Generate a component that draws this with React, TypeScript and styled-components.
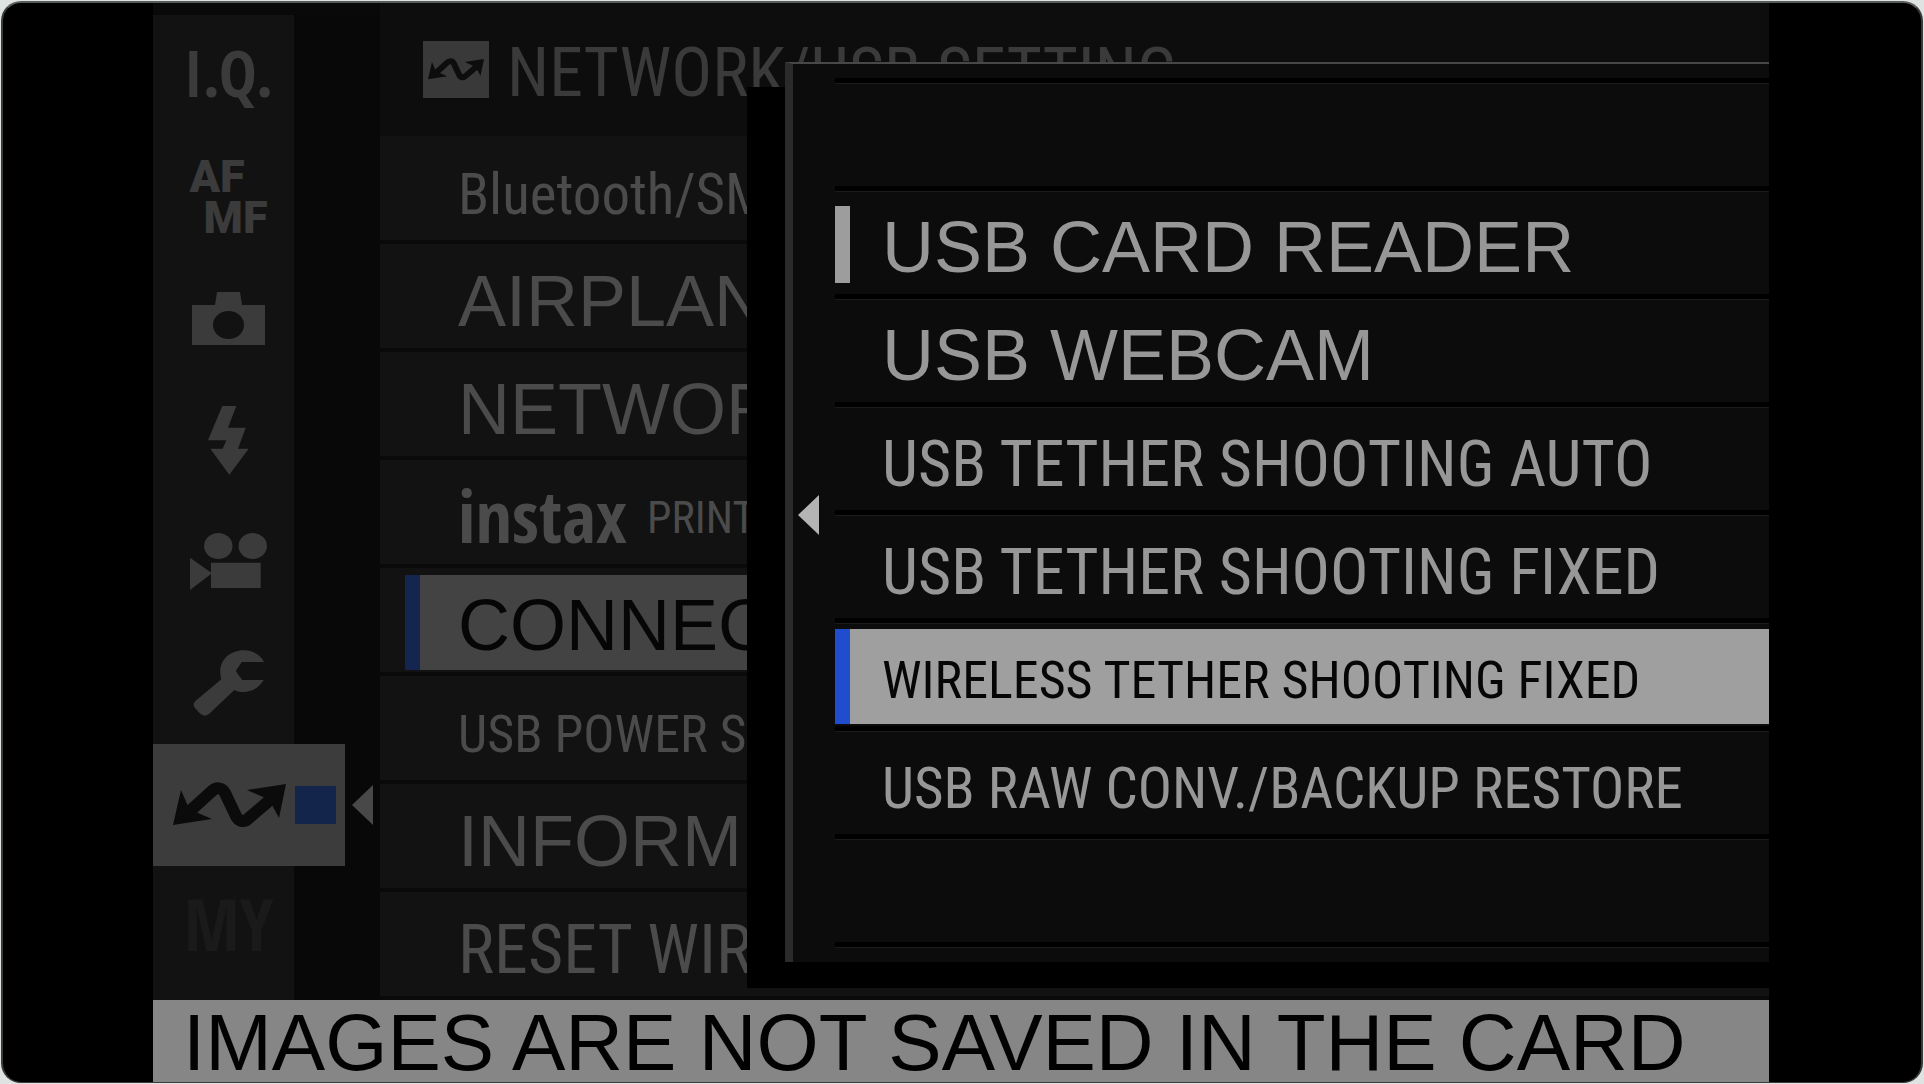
import React, { useState } from "react";
import styled, { createGlobalStyle } from "styled-components";

type Face = "regular" | "header" | "narrow" | "compact" | "dense" | "tight";

const sans = '"Liberation Sans", Arial, sans-serif';
const condensed = '"Roboto Condensed", Roboto, "Liberation Sans", sans-serif';
const heavy = '"Open Sans Condensed", "Roboto Condensed", Roboto, sans-serif';

const faces: Record<Face, { family: string; size: number; drop: number }> = {
  regular: { family: sans, size: 72, drop: 4 },
  header: { family: condensed, size: 68, drop: 7 },
  narrow: { family: condensed, size: 64, drop: 7 },
  compact: { family: condensed, size: 57, drop: 7 },
  dense: { family: condensed, size: 52, drop: 7 },
  tight: { family: condensed, size: 44, drop: 7 },
};

const GlobalStyle = createGlobalStyle`
  *, *::before, *::after { box-sizing: border-box; }
  body { margin: 0; background: #dfe3e1; }
  button { font: inherit; color: inherit; border: 0; padding: 0; margin: 0; background: none; text-align: left; cursor: pointer; }
  ul { list-style: none; margin: 0; padding: 0; }
`;

const Desk = styled.div`
  display: flex;
  min-height: 100vh;
  padding: 1px;
`;

const Frame = styled.div`
  flex: 1;
  display: flex;
  min-width: 0;
  padding: 0 152px 0 150px;
  overflow: hidden;
  background: #000;
  border: 2px solid #3a3c3c;
  border-top-color: #5a5c5a;
  border-bottom-width: 1px;
  border-radius: 20px;
`;

const Screen = styled.main`
  flex: 1;
  min-width: 0;
  display: flex;
  flex-direction: column;
  background: #0a0a0a;
  overflow: hidden;
`;

const Body = styled.div`
  position: relative;
  flex: 1;
  display: grid;
  grid-template-columns: 227px 1fr;
`;

const Tabs = styled.nav`
  display: flex;
  flex-direction: column;
  padding-bottom: 13px;
  border-top: 12px solid #090909;
  background: linear-gradient(to right, #121212 141px, #080808 141px);
`;

const TabRow = styled.div`
  flex: 1;
  display: flex;
  align-items: center;
  gap: 7px;
`;

const Tab = styled.button<{ $selected?: boolean; $faint?: boolean }>`
  align-self: stretch;
  width: ${(p) => (p.$selected ? 192 : 141)}px;
  display: flex;
  align-items: center;
  justify-content: center;
  gap: 9px;
  padding-left: 10px;
  background: ${(p) => (p.$selected ? "#3c3c3c" : "transparent")};
  color: ${(p) => (p.$selected ? "#0b0b0b" : p.$faint ? "#1a1a1a" : "#3b3b3b")};
`;

const TabText = styled.span<{ $large?: boolean }>`
  padding-bottom: 6px;
  font: bold ${(p) => (p.$large ? 72 : 64)}px ${heavy};
  line-height: 72px;
`;

const FocusText = styled.span`
  display: flex;
  flex-direction: column;
  font: 900 45px Roboto, ${sans};
  line-height: 41px;
`;

const FocusLine = styled.span<{ $shift?: boolean }>`
  padding-left: ${(p) => (p.$shift ? 14 : 0)}px;
`;

const PageChip = styled.span`
  width: 41px;
  height: 38px;
  background: #13254b;
`;

const Menu = styled.section`
  min-width: 0;
  background: #0d0d0d;
`;

const MenuHeader = styled.header`
  display: flex;
  align-items: center;
  gap: 18px;
  height: 133px;
  padding-left: 43px;
  color: #3a3a3a;
`;

const HeaderBadge = styled.span`
  display: flex;
  align-items: center;
  justify-content: center;
  width: 66px;
  height: 57px;
  background: #393939;
  color: #0d0d0d;
`;

const Title = styled.h1`
  margin: 0;
  padding-top: 6px;
  font: normal ${faces.header.size}px ${faces.header.family};
  white-space: nowrap;
`;

const MenuRow = styled.li`
  height: 108px;
  padding: 7px 0 2px 25px;
  background: #121212;
  border-bottom: 4px solid #0a0a0a;
`;

const RowButton = styled.button<{ $selected: boolean; $fill: string; $ink: string }>`
  display: flex;
  align-items: center;
  width: 100%;
  height: 95px;
  overflow: hidden;
  white-space: nowrap;
  background: ${(p) => (p.$selected ? p.$fill : "transparent")};
  color: ${(p) => (p.$selected ? "#060606" : p.$ink)};
`;

const Marker = styled.span<{ $color: string; $short?: boolean }>`
  flex: none;
  width: 15px;
  height: ${(p) => (p.$short ? "77px" : "100%")};
  background: ${(p) => p.$color};
`;

const Label = styled.span<{ $face: Face }>`
  padding: ${(p) => faces[p.$face].drop}px 0 0 32px;
  font: normal ${(p) => faces[p.$face].size}px ${(p) => faces[p.$face].family};
`;

const MenuLabel = styled(Label)`
  padding-left: 38px;
`;

const Brand = styled.b`
  margin-right: 20px;
  padding-bottom: 6px;
  font: bold 72px ${heavy};
  line-height: 72px;
`;

const MixedLabel = styled(MenuLabel)`
  display: flex;
  align-items: center;
`;

const Popup = styled.div`
  position: absolute;
  left: 594px;
  right: 0;
  top: 59px;
  padding: 0 0 26px 38px;

  &::before {
    content: "";
    position: absolute;
    inset: 25px 0 0 0;
    background: #000;
  }
`;

const PopupPanel = styled.section`
  position: relative;
  display: grid;
  grid-template-columns: 42px 1fr;
  padding-top: 14px;
  background: #0c0c0c;
  border-left: 8px solid #2b2b2b;
  border-top: 2px solid #484848;
`;

const Gutter = styled.div`
  display: flex;
  align-items: center;
  padding: 0 0 10px 5px;
  color: #b4b4b4;
`;

const OptionRow = styled.li`
  height: 108px;
  padding: 6px 0 2px;
  border-top: 5px solid #000;
  box-shadow: inset 0 1px #1b1b1b;
`;

const ListEnd = styled.li`
  height: 20px;
  border-top: 5px solid #000;
  box-shadow: inset 0 1px #1b1b1b;
`;

const Message = styled.footer`
  display: flex;
  align-items: center;
  height: 82px;
  padding: 4px 0 0 30px;
  background: #868686;
  color: #020202;
  font: normal 80px ${sans};
  line-height: 78px;
  white-space: nowrap;
`;

const LinkIcon = ({ width = 113 }: { width?: number }) => (
  <svg width={width} viewBox="0 0 113 46" fill="currentColor" aria-hidden="true">
    <path
      d="M17 29 L38 10 C43 5 49 5 52 11 L62 32 C65 40 71 41 76 36 L97 18"
      fill="none"
      stroke="currentColor"
      strokeWidth="12"
    />
    <path d="M0 43 L8 8 L15 24 L25 31 L39 37 Z" />
    <path d="M113 2 L74 8 L90 15 L99 23 L106 36 Z" />
  </svg>
);

const CameraIcon = () => (
  <svg width="73" height="53" viewBox="0 0 73 53" fill="currentColor" aria-hidden="true">
    <path
      fillRule="evenodd"
      d="M25 0H48L50 13H73V53H0V13H23Z M21 33a15.5 14 0 1 0 31 0a15.5 14 0 1 0 -31 0Z"
    />
  </svg>
);

const FlashIcon = () => (
  <svg width="41" height="69" viewBox="0 0 41 69" fill="currentColor" aria-hidden="true">
    <path d="M14.3 0H28.3L20 21.7H37.7L30 42.7H40.7L21.3 68.7L2.3 42.7H14.7L18.3 34.3H0Z" />
  </svg>
);

const MovieIcon = () => (
  <svg width="77" height="57" viewBox="0 0 77 57" fill="currentColor" aria-hidden="true">
    <ellipse cx="28.3" cy="13" rx="14.2" ry="13" />
    <ellipse cx="62.7" cy="13" rx="14.2" ry="13" />
    <path d="M21 29.7H70.7V55H21V41L0 57V24.7L21 39.5Z" />
  </svg>
);

const WrenchIcon = () => (
  <svg width="71" height="66" viewBox="0 0 71 66" fill="currentColor" aria-hidden="true">
    <path d="M71 12H48.7L42.7 21L49.3 30H70.7C66 38 58 42 50.7 42C47 42 44 41.5 41.3 40L16 64Q11.3 67.5 7 63.5L2 58Q-1 54 3 50.5L28.3 29.3C27.5 27 27.3 24 27.3 21C27.3 9 38 .3 50.7 .3C60 .3 67.5 5 71 12Z" />
  </svg>
);

const BackArrow = ({ color = "currentColor" }: { color?: string }) => (
  <svg width="21" height="40" viewBox="0 0 21 40" fill={color} aria-hidden="true">
    <path d="M0 20L21 0V40Z" />
  </svg>
);

const tabs: { name: string; icon: React.ReactNode; faint?: boolean }[] = [
  { name: "Image quality", icon: <TabText>I.Q.</TabText> },
  {
    name: "Focus",
    icon: (
      <FocusText>
        <FocusLine>AF</FocusLine>
        <FocusLine $shift>MF</FocusLine>
      </FocusText>
    ),
  },
  { name: "Shooting", icon: <CameraIcon /> },
  { name: "Flash", icon: <FlashIcon /> },
  { name: "Movie", icon: <MovieIcon /> },
  { name: "Set up", icon: <WrenchIcon /> },
  { name: "Network", icon: <LinkIcon /> },
  { name: "My menu", icon: <TabText $large>MY</TabText>, faint: true },
];

const menu: { text: string; face: Face; brand?: string }[] = [
  { text: "Bluetooth/SM", face: "compact" },
  { text: "AIRPLAN", face: "regular" },
  { text: "NETWOR", face: "regular" },
  { text: "PRINT", face: "tight", brand: "instax" },
  { text: "CONNEC", face: "regular" },
  { text: "USB POWER SU", face: "dense" },
  { text: "INFORM", face: "regular" },
  { text: "RESET WIR", face: "header" },
];

const options: { text: string; face: Face }[] = [
  { text: "USB CARD READER", face: "regular" },
  { text: "USB WEBCAM", face: "regular" },
  { text: "USB TETHER SHOOTING AUTO", face: "narrow" },
  { text: "USB TETHER SHOOTING FIXED", face: "narrow" },
  { text: "WIRELESS TETHER SHOOTING FIXED", face: "dense" },
  { text: "USB RAW CONV./BACKUP RESTORE", face: "compact" },
];

export default function App() {
  const [tab, setTab] = useState(6);
  const [cursor, setCursor] = useState(4);
  const current = 0;

  return (
    <>
      <GlobalStyle />
      <Desk>
        <Frame>
          <Screen>
            <Body>
              <Tabs>
                {tabs.map((t, i) => (
                  <TabRow key={t.name}>
                    <Tab
                      type="button"
                      aria-label={t.name}
                      $selected={i === tab}
                      $faint={t.faint}
                      onClick={() => setTab(i)}
                    >
                      {t.icon}
                      {i === tab && <PageChip />}
                    </Tab>
                    {i === tab && <BackArrow color="#484848" />}
                  </TabRow>
                ))}
              </Tabs>
              <Menu>
                <MenuHeader>
                  <HeaderBadge>
                    <LinkIcon width={56} />
                  </HeaderBadge>
                  <Title>NETWORK/USB SETTING</Title>
                </MenuHeader>
                <ul>
                  {menu.map((m, i) => (
                    <MenuRow key={m.text}>
                      <RowButton type="button" $selected={i === 4} $fill="#434343" $ink="#4b4b4b">
                        <Marker $color={i === 4 ? "#14264f" : "transparent"} />
                        {m.brand ? (
                          <MixedLabel $face={m.face}>
                            <Brand>{m.brand}</Brand>
                            {m.text}
                          </MixedLabel>
                        ) : (
                          <MenuLabel $face={m.face}>{m.text}</MenuLabel>
                        )}
                      </RowButton>
                    </MenuRow>
                  ))}
                </ul>
              </Menu>
              <Popup>
                <PopupPanel>
                  <Gutter>
                    <BackArrow />
                  </Gutter>
                  <ul>
                    <OptionRow aria-hidden="true" />
                    {options.map((o, i) => (
                      <OptionRow key={o.text}>
                        <RowButton
                          type="button"
                          $selected={i === cursor}
                          $fill="#9f9f9f"
                          $ink="#979797"
                          onClick={() => setCursor(i)}
                        >
                          <Marker
                            $color={i === cursor ? "#1f4dcd" : i === current ? "#9d9d9d" : "transparent"}
                            $short={i !== cursor}
                          />
                          <Label $face={o.face}>{o.text}</Label>
                        </RowButton>
                      </OptionRow>
                    ))}
                    <OptionRow aria-hidden="true" />
                    <ListEnd aria-hidden="true" />
                  </ul>
                </PopupPanel>
              </Popup>
            </Body>
            <Message role="status">IMAGES ARE NOT SAVED IN THE CARD</Message>
          </Screen>
        </Frame>
      </Desk>
    </>
  );
}
